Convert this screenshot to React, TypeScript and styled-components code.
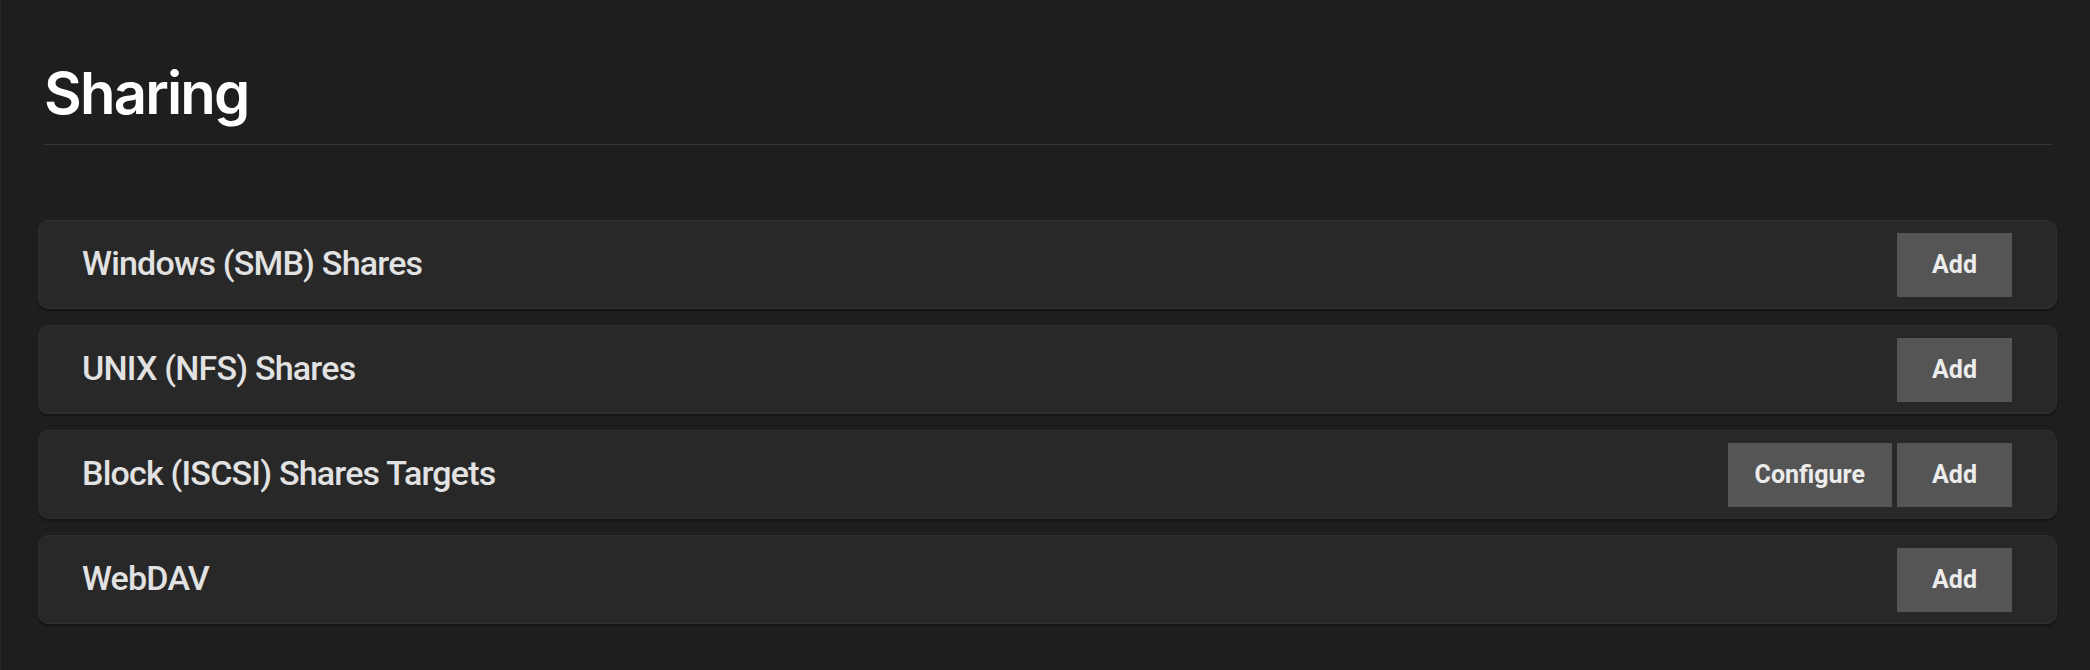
import React from "react";
import styled, { createGlobalStyle } from "styled-components";

const GlobalStyle = createGlobalStyle`
  html, body {
    margin: 0;
    padding: 0;
    background: #1e1e1e;
  }
  body {
    font-family: Roboto, "Liberation Sans", sans-serif;
  }
  * { box-sizing: border-box; }
`;

const Page = styled.main`
  min-height: 670px;
  background: #1e1e1e;
  border-left: 1px solid #262626;
  padding: 0 33px 40px 37px;
`;

const Header = styled.header`
  margin: 0 5px 0 6px;
  padding-top: 64px;
  padding-bottom: 22px;
  border-bottom: 1px solid #383838;
`;

const Title = styled.h1`
  margin: 0;
  font-family: Inter, Roboto, sans-serif;
  font-size: 58px;
  line-height: 58px;
  font-weight: 600;
  color: #ffffff;
  letter-spacing: -1.8px;
`;

const List = styled.section`
  display: flex;
  flex-direction: column;
  gap: 16px;
  margin-top: 75px;
`;

const Card = styled.div`
  height: 89px;
  display: flex;
  align-items: center;
  justify-content: space-between;
  padding: 0 44px 0 43px;
  background: #282828;
  border: 1px solid #2f2f2f;
  border-radius: 10px;
  box-shadow: 0 2px 2px rgba(0, 0, 0, 0.35);
`;

const Label = styled.h3`
  margin: 0 0 3px;
  font-family: Roboto, "Liberation Sans", sans-serif;
  font-size: 34px;
  font-weight: 500;
  color: #e2e2e2;
  letter-spacing: -0.8px;
`;

const Actions = styled.div`
  display: flex;
  gap: 5px;
`;

const Button = styled.button`
  height: 64px;
  min-width: 115px;
  padding: 0 27px;
  border: none;
  border-radius: 0;
  background: #555555;
  color: #ececec;
  font-family: Roboto, "Liberation Sans", sans-serif;
  font-size: 25px;
  font-weight: 700;
  cursor: pointer;
`;

type Share = { title: string; configure?: boolean };

const shares: Share[] = [
  { title: "Windows (SMB) Shares" },
  { title: "UNIX (NFS) Shares" },
  { title: "Block (ISCSI) Shares Targets", configure: true },
  { title: "WebDAV" },
];

export default function App() {
  return (
    <>
      <GlobalStyle />
      <Page>
        <Header>
          <Title>Sharing</Title>
        </Header>
        <List>
          {shares.map((s) => (
            <Card key={s.title}>
              <Label>{s.title}</Label>
              <Actions>
                {s.configure && <Button>Configure</Button>}
                <Button>Add</Button>
              </Actions>
            </Card>
          ))}
        </List>
      </Page>
    </>
  );
}
